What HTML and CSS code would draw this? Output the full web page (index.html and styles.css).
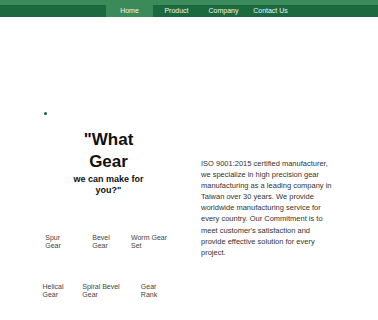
FILE: index.html
```html
<!DOCTYPE html>
<html lang="en">
<head>
    <meta charset="UTF-8">
    <meta name="viewport" content="width=device-width, initial-scale=1.0">
    <title>Gear Manufacturer</title>
    <link rel="stylesheet" href="styles.css">
</head>
<body>
    <!-- Menu Bar -->
    <div class="menu-bar">
        <a href="#" class="active">Home</a>
        <a href="#">Product</a>
        <a href="#">Company</a>
        <a href="#">Contact Us</a>
    </div>

    <div class="content">
        <!-- Product lineup -->
        <div class="lineup">
            <ul class="lineup-list">
                <li>
                    <h1 class="lineup-title">"What Gear <small>we can make for you?"</small></h1>
                    <div class="gear-grid">
                        <a href="#" class="gear-item">Spur<br>Gear</a>
                        <a href="#" class="gear-item">Bevel<br>Gear</a>
                        <a href="#" class="gear-item">Worm Gear<br>Set</a>
                        <a href="#" class="gear-item">Helical<br>Gear</a>
                        <a href="#" class="gear-item">Spiral Bevel<br>Gear</a>
                        <a href="#" class="gear-item">Gear<br>Rank</a>
                    </div>
                </li>
            </ul>
        </div>

        <!-- About text -->
        <div class="about">
            <p>ISO 9001:2015 certified manufacturer, we specialize in high precision gear manufacturing as a leading company in Taiwan over 30 years. We provide worldwide manufacturing service for every country. Our Commitment is to meet customer's satisfaction and provide effective solution for every project.</p>
        </div>
    </div>
</body>
</html>
```

FILE: styles.css
```css
/* Basic reset and font setup */
* {
    margin: 0;
    padding: 0;
    box-sizing: border-box;
}

body {
    font-family: 'Liberation Sans', Arial, sans-serif;
    background-color: #ffffff;
}

/* Menu Bar Styling */
.menu-bar {
    display: flex;
    padding-left: 106px;
    background-color: #1b6a3f;
    border-top: 5px solid #3b8a59;
}

.menu-bar a {
    width: 47px;
    line-height: 12px;
    font-size: 7px;
    color: #f0f5f1;
    text-align: center;
    text-decoration: none;
}

.menu-bar a.active {
    background-color: #3b8a59;
}

/* Page content */
.content {
    display: flex;
}

.lineup {
    width: 190px;
}

.lineup-list {
    list-style: none;
    padding-top: 95px;
}

/* green bullet */
.lineup-list li::before {
    content: "";
    display: block;
    width: 3px;
    height: 3px;
    margin-left: 44px;
    border-radius: 50%;
    background-color: #16643a;
}

.lineup-title {
    width: 81px;
    margin: 14px 0 0 68px;
    text-align: center;
    font-size: 17px;
    line-height: 22px;
    font-weight: bold;
    color: #111;
}

.lineup-title small {
    display: block;
    margin-top: 1px;
    font-size: 9px;
    line-height: 10.5px;
}

/* Gear list */
.gear-grid {
    display: grid;
    grid-template-columns: repeat(3, 48px);
    justify-items: center;
    row-gap: 33px;
    margin-top: 39px;
    padding-left: 29px;
}

.gear-item {
    font-size: 7px;
    line-height: 8px;
    color: #444;
    text-decoration: none;
}

.about {
    width: 146px;
    padding: 141px 0 0 11px;
}

.about p {
    font-size: 7.5px;
    line-height: 11.1px;
    color: #333;
}
```
